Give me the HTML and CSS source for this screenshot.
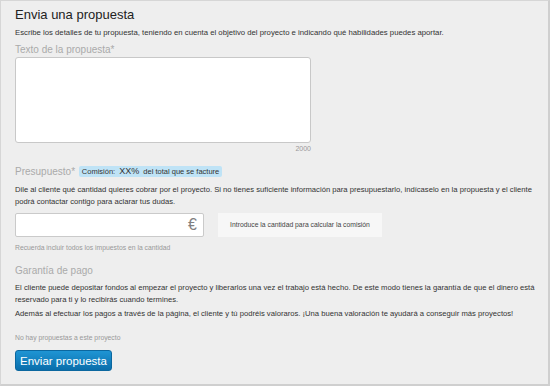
FILE: index.html
```html
<!DOCTYPE html>
<html lang="es">
<head>
    <meta charset="UTF-8">
    <title>Envía una propuesta</title>
    <link rel="stylesheet" href="styles.css">
</head>
<body>
    <div class="propuesta">
        <h2 class="titulo">Envia una propuesta</h2>
        <p class="intro">Escribe los detalles de tu propuesta, teniendo en cuenta el objetivo del proyecto e indicando qué habilidades puedes aportar.</p>

        <label class="campo">Texto de la propuesta*</label>
        <div class="texto-wrap">
            <textarea class="texto"></textarea>
            <div class="contador">2000</div>
        </div>

        <div class="campo campo-presupuesto">
            Presupuesto*
            <span class="comision">Comisión: <b>XX%</b> del total que se facture</span>
        </div>
        <p class="parrafo parrafo-dile">Dile al cliente qué cantidad quieres cobrar por el proyecto. Si no tienes suficiente información para presupuestarlo, indícaselo en la propuesta y el cliente podrá contactar contigo para aclarar tus dudas.</p>

        <div class="importe">
            <div class="importe-input">
                <input type="text">
                <span class="euro">€</span>
            </div>
            <div class="calculo">Introduce la cantidad para calcular la comisión</div>
        </div>
        <p class="nota">Recuerda incluir todos los impuestos en la cantidad</p>

        <div class="campo garantia">Garantía de pago</div>
        <p class="parrafo parrafo-garantia">El cliente puede depositar fondos al empezar el proyecto y liberarlos una vez el trabajo está hecho. De este modo tienes la garantía de que el dinero está reservado para ti y lo recibirás cuando termines.</p>
        <p class="parrafo parrafo-ademas">Además al efectuar los pagos a través de la página, el cliente y tú podréis valoraros. ¡Una buena valoración te ayudará a conseguir más proyectos!</p>

        <p class="nota sin-propuestas">No hay propuestas a este proyecto</p>
        <button type="button" class="btn-enviar">Enviar propuesta</button>
    </div>
</body>
</html>
```

FILE: styles.css
```css
html, body {
    margin: 0;
    padding: 0;
    background-color: #eeeeee;
}

body {
    font-family: "Liberation Sans", Arial, sans-serif;
    color: #333;
}

.propuesta {
    box-sizing: border-box;
    width: 550px;
    height: 386px;
    overflow: hidden;
    border: 1px solid #d6d6d6;
    border-right: 2px solid #cfcfcf;
    border-bottom: 2px solid #cfcfcf;
    padding: 6px 8px 0 14px;
}

.titulo {
    margin: 0;
    font-size: 13px;
    font-weight: normal;
    color: #222;
    line-height: 16px;
}

.intro {
    margin: 4px 0 0;
    font-size: 7.75px;
    line-height: 12px;
}

.campo {
    display: block;
    margin-top: 4px;
    font-size: 10px;
    color: #aaa;
    line-height: 13px;
}

.texto-wrap {
    width: 296px;
}

.texto {
    display: block;
    box-sizing: border-box;
    width: 296px;
    height: 86px;
    margin: 1px 0 0;
    border: 1px solid #c8c8c8;
    border-radius: 3px;
    background: #fff;
    resize: none;
}

.contador {
    text-align: right;
    font-size: 7px;
    color: #999;
    line-height: 12px;
}

.campo-presupuesto {
    margin-top: 10px;
}

.comision {
    display: inline-block;
    margin-left: 1px;
    background-color: #bfe3f6;
    border-radius: 2px;
    padding: 0 3px;
    font-size: 7.5px;
    line-height: 10px;
    color: #333;
    vertical-align: 1px;
}

.comision b {
    font-weight: normal;
    font-size: 9px;
    margin: 0 2px;
}

.parrafo {
    margin: 0;
    font-size: 7.65px;
    line-height: 12px;
}

.parrafo-dile {
    margin-top: 6px;
}

.parrafo-garantia {
    margin-top: 5px;
}

.parrafo-ademas {
    margin-top: 2px;
}

.importe {
    display: flex;
    gap: 14px;
    margin-top: 5px;
}

.importe-input {
    position: relative;
    width: 189px;
    height: 24px;
    box-sizing: border-box;
    border: 1px solid #cacaca;
    border-radius: 2px;
    background: #fff;
}

.importe-input input {
    border: none;
    width: 160px;
    height: 20px;
    background: transparent;
}

.euro {
    position: absolute;
    right: 6px;
    top: 2px;
    font-family: "Liberation Sans", Arial, sans-serif;
    font-size: 16px;
    line-height: 18px;
    color: #808080;
}

.calculo {
    width: 164px;
    height: 24px;
    background-color: #f7f7f7;
    font-size: 6.8px;
    line-height: 24px;
    text-align: center;
    color: #444;
}

.nota {
    margin: 5px 0 0;
    font-size: 6.8px;
    color: #999;
    line-height: 12px;
}

.garantia {
    margin-top: 10px;
}

.sin-propuestas {
    margin-top: 12px;
}

.btn-enviar {
    display: block;
    margin-top: 6px;
    width: 97px;
    height: 21px;
    border: 1px solid #0b679f;
    border-radius: 3px;
    background: linear-gradient(#1f95d4, #0a6eab);
    color: #fff;
    font-family: "Liberation Sans", Arial, sans-serif;
    font-size: 11.5px;
    padding: 0;
}
```
